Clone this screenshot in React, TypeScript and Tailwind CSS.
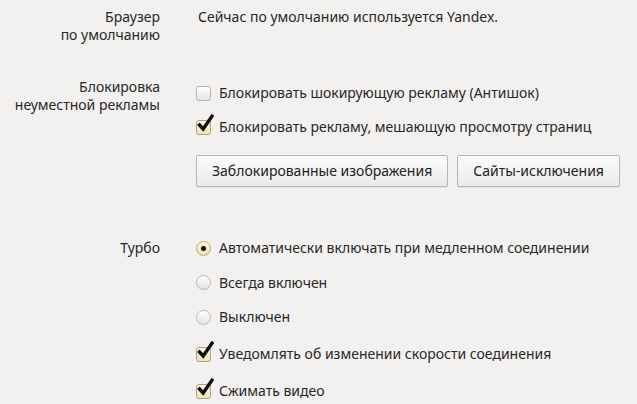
import React from 'react'

const font = { fontFamily: '"Noto Sans", "Open Sans", sans-serif' }

function Checkbox({ checked }: { checked?: boolean }) {
  return (
    <span className="relative inline-block h-[15px] w-[15px] shrink-0">
      <span
        className={
          checked
            ? 'absolute inset-0 rounded-[3px] border border-[#a7a08a] bg-gradient-to-b from-[#fdf6d8] to-[#f3e5b0]'
            : 'absolute inset-0 rounded-[3px] border border-[#b4b4b4] bg-gradient-to-b from-[#ffffff] to-[#e4e4e4]'
        }
      />
      {checked && (
        <svg className="absolute left-[1px] top-[-6px]" width="17" height="19" viewBox="0 0 17 19">
          <path d="M2.5 11 L6.2 15 L15 2.2" fill="none" stroke="#111" strokeWidth="3.4" strokeLinecap="square" strokeLinejoin="miter" />
        </svg>
      )}
    </span>
  )
}

function Radio({ checked }: { checked?: boolean }) {
  return (
    <span
      className={
        checked
          ? 'flex h-[15px] w-[15px] shrink-0 items-center justify-center rounded-full border border-[#b3ab90] bg-gradient-to-b from-[#fdf6d8] to-[#f1e2a8]'
          : 'flex h-[15px] w-[15px] shrink-0 items-center justify-center rounded-full border border-[#b8b8b8] bg-gradient-to-b from-[#ffffff] to-[#e2e2e2]'
      }
    >
      {checked && <span className="h-[5px] w-[5px] rounded-full bg-[#111]" />}
    </span>
  )
}

function Option({ kind, checked, label, h = 'h-[34px]' }: { kind: 'check' | 'radio'; checked?: boolean; label: string; h?: string }) {
  return (
    <div className={`flex items-center ${h}`}>
      {kind === 'check' ? <Checkbox checked={checked} /> : <Radio checked={checked} />}
      <span className="ml-[8px]">{label}</span>
    </div>
  )
}

function Button({ children }: { children: React.ReactNode }) {
  return (
    <button className="h-[32px] rounded-[2px] border border-[#b6b6b6] bg-gradient-to-b from-[#fbfbfb] to-[#ebebeb] px-[15px] text-[#222] shadow-[0_1px_0_rgba(0,0,0,0.06)]">
      {children}
    </button>
  )
}

export default function App() {
  return (
    <div className="h-[404px] w-[637px] overflow-hidden bg-[#f2f1ef] text-[14px] leading-[18px] text-[#282828]" style={font}>
      {/* default browser */}
      <div className="flex pt-[8px]">
        <div className="w-[160px] text-right">
          Браузер
          <br />
          по умолчанию
        </div>
        <div className="ml-[38px]">Сейчас по умолчанию используется Yandex.</div>
      </div>

      {/* ad blocking */}
      <div className="mt-[32px] flex">
        <div className="w-[160px] pt-[2px] text-right">
          Блокировка
          <br />
          неуместной рекламы
        </div>
        <div className="ml-[36px] flex flex-col">
          <Option kind="check" label="Блокировать шокирующую рекламу (Антишок)" />
          <Option kind="check" checked label="Блокировать рекламу, мешающую просмотру страниц" />
          <div className="mt-[11px] flex gap-[9px]">
            <Button>Заблокированные изображения</Button>
            <Button>Сайты-исключения</Button>
          </div>
        </div>
      </div>

      {/* turbo */}
      <div className="mt-[44px] flex">
        <div className="w-[160px] pt-[8px] text-right">Турбо</div>
        <div className="ml-[36px] flex flex-col">
          <Option kind="radio" checked label="Автоматически включать при медленном соединении" />
          <Option kind="radio" label="Всегда включен" h="h-[35px]" />
          <Option kind="radio" label="Выключен" />
          <Option kind="check" checked label="Уведомлять об изменении скорости соединения" h="h-[40px]" />
          <Option kind="check" checked label="Сжимать видео" h="h-[34px]" />
        </div>
      </div>
    </div>
  )
}
